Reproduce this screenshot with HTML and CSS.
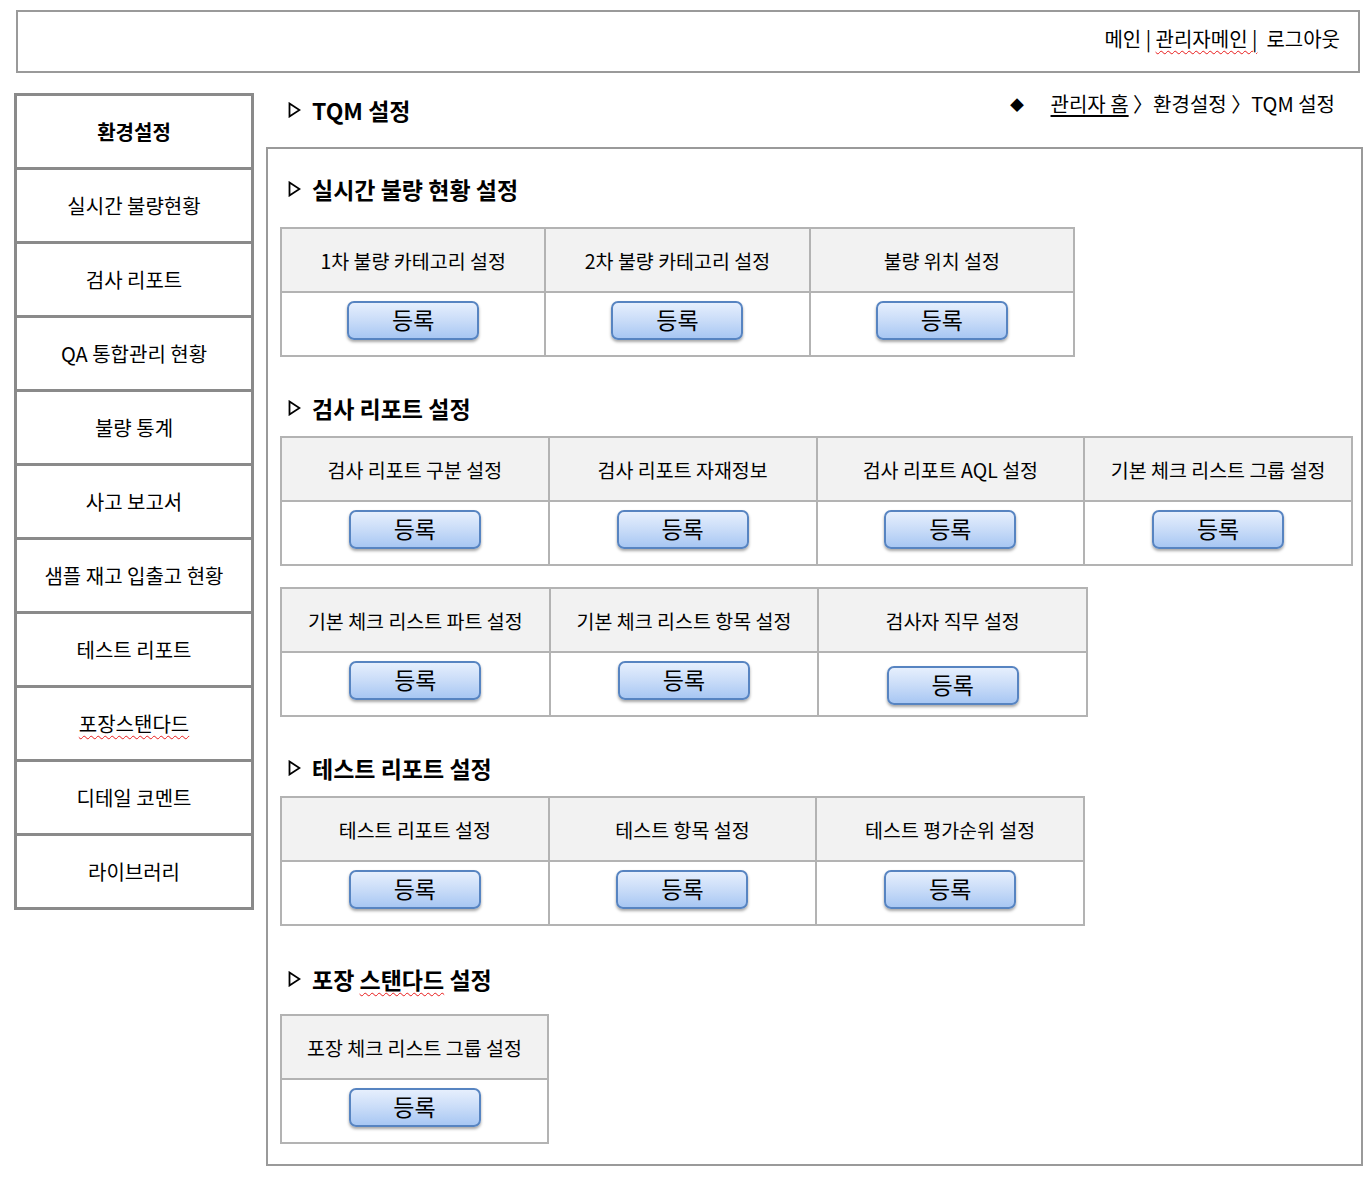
FILE: index.html
```html
<html>
<head>
  <meta charset="utf-8">
  <title>TQM 설정</title>
  <link rel="stylesheet" href="styles.css">
</head>
<body>
  <div class="top-bar">
    <div class="top-links">메인 | <span class="typo">관리자메인 |</span>&nbsp; 로그아웃</div>
  </div>

  <div class="layout">
    <ul class="side-menu">
      <li class="active">환경설정</li>
      <li>실시간 불량현황</li>
      <li>검사 리포트</li>
      <li>QA 통합관리 현황</li>
      <li>불량 통계</li>
      <li>사고 보고서</li>
      <li>샘플 재고 입출고 현황</li>
      <li>테스트 리포트</li>
      <li><span class="typo">포장스탠다드</span></li>
      <li>디테일 코멘트</li>
      <li>라이브러리</li>
    </ul>

    <div class="main">
      <div class="page-head">
        <h1 class="page-title">
          <svg class="tri" viewBox="0 0 13 16"><path d="M1.5 1.5 L11.5 8 L1.5 14.5 Z" fill="none" stroke="#000" stroke-width="1.8"/></svg>
          <span>TQM 설정</span>
        </h1>
        <div class="crumbs">
          <span class="diamond">◆</span>
          <a href="#" class="crumb-home">관리자 홈</a> 〉환경설정 〉TQM 설정
        </div>
      </div>

      <div class="panel">
        <!-- 실시간 불량 현황 -->
        <h2 class="sec-title first">
          <svg class="tri" viewBox="0 0 13 16"><path d="M1.5 1.5 L11.5 8 L1.5 14.5 Z" fill="none" stroke="#000" stroke-width="1.8"/></svg>
          <span>실시간 불량 현황 설정</span>
        </h2>
        <table class="set-table t-795">
          <tr>
            <th>1차 불량 카테고리 설정</th>
            <th>2차 불량 카테고리 설정</th>
            <th>불량 위치 설정</th>
          </tr>
          <tr>
            <td><button class="reg-btn">등록</button></td>
            <td><button class="reg-btn">등록</button></td>
            <td><button class="reg-btn">등록</button></td>
          </tr>
        </table>

        <!-- 검사 리포트 -->
        <h2 class="sec-title">
          <svg class="tri" viewBox="0 0 13 16"><path d="M1.5 1.5 L11.5 8 L1.5 14.5 Z" fill="none" stroke="#000" stroke-width="1.8"/></svg>
          <span>검사 리포트 설정</span>
        </h2>
        <table class="set-table t-1073">
          <tr>
            <th>검사 리포트 구분 설정</th>
            <th>검사 리포트 자재정보</th>
            <th>검사 리포트 AQL 설정</th>
            <th>기본 체크 리스트 그룹 설정</th>
          </tr>
          <tr>
            <td><button class="reg-btn">등록</button></td>
            <td><button class="reg-btn">등록</button></td>
            <td><button class="reg-btn">등록</button></td>
            <td><button class="reg-btn">등록</button></td>
          </tr>
        </table>
        <table class="set-table t-808 next">
          <tr>
            <th>기본 체크 리스트 파트 설정</th>
            <th>기본 체크 리스트 항목 설정</th>
            <th>검사자 직무 설정</th>
          </tr>
          <tr>
            <td><button class="reg-btn">등록</button></td>
            <td><button class="reg-btn">등록</button></td>
            <td><button class="reg-btn low">등록</button></td>
          </tr>
        </table>

        <!-- 테스트 리포트 -->
        <h2 class="sec-title">
          <svg class="tri" viewBox="0 0 13 16"><path d="M1.5 1.5 L11.5 8 L1.5 14.5 Z" fill="none" stroke="#000" stroke-width="1.8"/></svg>
          <span>테스트 리포트 설정</span>
        </h2>
        <table class="set-table t-805">
          <tr>
            <th>테스트 리포트 설정</th>
            <th>테스트 항목 설정</th>
            <th>테스트 평가순위 설정</th>
          </tr>
          <tr>
            <td><button class="reg-btn">등록</button></td>
            <td><button class="reg-btn">등록</button></td>
            <td><button class="reg-btn">등록</button></td>
          </tr>
        </table>

        <!-- 포장 스탠다드 -->
        <h2 class="sec-title last">
          <svg class="tri" viewBox="0 0 13 16"><path d="M1.5 1.5 L11.5 8 L1.5 14.5 Z" fill="none" stroke="#000" stroke-width="1.8"/></svg>
          <span>포장 <span class="typo">스탠다드</span> 설정</span>
        </h2>
        <table class="set-table t-269">
          <tr>
            <th>포장 체크 리스트 그룹 설정</th>
          </tr>
          <tr>
            <td><button class="reg-btn">등록</button></td>
          </tr>
        </table>
      </div>
    </div>
  </div>
</body>
</html>
```

FILE: styles.css
```css
body {
  margin: 0;
  padding: 0;
  background: #fff;
  color: #000;
  font-family: "Noto Sans CJK KR", "Noto Sans", sans-serif;
}
.typo {
  text-decoration: underline wavy #e81a1a;
  text-decoration-thickness: 1px;
  text-underline-offset: 3px;
}

/* top bar */
.top-bar {
  margin: 10px 10px 0 16px;
  height: 59px;
  border: 2px solid #9a9a9a;
  display: flex;
  align-items: center;
  justify-content: flex-end;
  padding-right: 18px;
}
.top-links {
  font-size: 20px;
  margin-top: -6px;
  white-space: pre;
}

/* layout */
.layout {
  display: flex;
  gap: 12px;
  margin-top: 20px;
  padding-left: 14px;
  align-items: flex-start;
}
.side-menu {
  list-style: none;
  margin: 0;
  padding: 0;
  width: 234px;
  border: 3px solid #8a8a8a;
  flex-shrink: 0;
}
.side-menu li {
  height: 71px;
  border-bottom: 3px solid #8a8a8a;
  display: flex;
  align-items: center;
  justify-content: center;
  font-size: 20px;
}
.side-menu li:last-child {
  border-bottom: none;
}
.side-menu li.active {
  font-weight: 700;
}

.main {
  width: 1097px;
}
.page-head {
  height: 54px;
  display: flex;
  justify-content: space-between;
  padding: 0 28px 0 22px;
}
.page-title {
  margin: 0;
  margin-top: 0;
  font-size: 23px;
  font-weight: 700;
  line-height: 30px;
  display: flex;
  align-items: flex-start;
  padding-top: 2px;
}
.page-title .tri {
  margin-top: 7px;
}
.tri {
  width: 13px;
  height: 16px;
  margin-right: 11px;
  flex-shrink: 0;
}
.crumbs {
  font-size: 20px;
  line-height: 30px;
  margin-top: -4px;
}
.diamond {
  font-size: 14px;
  margin-right: 22px;
  vertical-align: 2px;
}
.crumb-home {
  color: #000;
  text-decoration: underline;
  text-underline-offset: 3px;
}

/* content panel */
.panel {
  border: 2px solid #9a9a9a;
  padding: 0 0 20px 12px;
}
.sec-title {
  margin: 36px 0 13px 8px;
  font-size: 23px;
  font-weight: 700;
  line-height: 30px;
  display: flex;
  align-items: center;
}
.sec-title.first {
  margin-top: 25px;
  margin-bottom: 23px;
}
.sec-title.last {
  margin-top: 38px;
  margin-bottom: 20px;
}

.set-table {
  border-collapse: collapse;
  table-layout: fixed;
  border: 2px solid #b3b3b3;
}
.set-table.next {
  margin-top: 21px;
}
.t-795 { width: 795px; }
.t-1073 { width: 1073px; }
.t-808 { width: 808px; }
.t-805 { width: 805px; }
.t-269 { width: 269px; }
.set-table th,
.set-table td {
  border: 2px solid #b3b3b3;
  height: 64px;
  padding: 0;
  text-align: center;
  font-size: 19.5px;
}
.set-table th {
  background: #f2f2f2;
  font-weight: 400;
}
.set-table td {
  vertical-align: top;
  padding-top: 8px;
}

.reg-btn {
  width: 132px;
  height: 39px;
  border: 2px solid #5784c1;
  border-radius: 7px;
  background: linear-gradient(to bottom, #e6effd 0%, #c9dcf8 50%, #a8c7f3 100%);
  box-shadow: 0 2px 3px rgba(0, 0, 0, 0.35);
  font-family: inherit;
  font-size: 23px;
  color: #000;
  line-height: 33px;
  padding: 0 0 3px;
  cursor: pointer;
}
.reg-btn.low {
  margin-top: 5px;
}
```
